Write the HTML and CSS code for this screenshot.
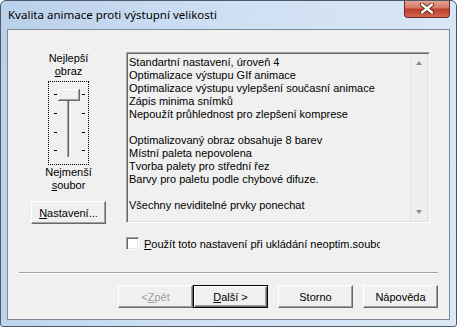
FILE: index.html
```html
<!DOCTYPE html>
<html lang="cs">
<head>
  <meta charset="UTF-8"/>
  <title>Kvalita animace proti výstupní velikosti</title>
  <link rel="stylesheet" href="styles.css">
</head>
<body>
  <div class="window">
    <div class="titlebar">
      <span class="title">Kvalita animace proti výstupní velikosti</span>
      <div class="close-btn">
        <svg width="16" height="11" viewBox="0 0 16 11">
          <path d="M3 1.5 L13 9.5 M13 1.5 L3 9.5" stroke="#5a2218" stroke-width="4.2" stroke-linecap="round"/>
          <path d="M3 1.5 L13 9.5 M13 1.5 L3 9.5" stroke="#fff" stroke-width="2.4" stroke-linecap="round"/>
        </svg>
      </div>
    </div>
    <div class="client">
      <div class="main">
        <div class="quality">
          <div class="q-label">Nejlepší<br><u>o</u>braz</div>
          <div class="slider">
            <svg width="39" height="82" viewBox="0 0 39 82">
              <g fill="#000">
                <rect x="5" y="12" width="3" height="1"/><rect x="33" y="12" width="3" height="1"/>
                <rect x="5" y="31" width="3" height="1"/><rect x="33" y="31" width="3" height="1"/>
                <rect x="5" y="50" width="3" height="1"/><rect x="33" y="50" width="3" height="1"/>
                <rect x="5" y="68" width="3" height="1"/><rect x="33" y="68" width="3" height="1"/>
              </g>
              <rect x="18" y="18" width="1" height="57" fill="#a0a0a0"/>
              <rect x="19" y="18" width="1" height="57" fill="#696969"/>
              <rect x="20" y="18" width="1" height="57" fill="#e3e3e3"/>
              <rect x="21" y="18" width="1" height="57" fill="#fff"/>
              <rect x="9" y="7" width="22" height="12" fill="#696969"/>
              <rect x="9" y="7" width="21" height="11" fill="#fff"/>
              <rect x="10" y="8" width="20" height="10" fill="#a0a0a0"/>
              <rect x="10" y="8" width="19" height="9" fill="#f0f0f0"/>
            </svg>
          </div>
          <div class="q-label low">Nejmenší<br><u>s</u>oubor</div>
          <div class="btn settings"><u>N</u>astavení...</div>
        </div>
        <div class="listbox">
          <div class="list-text">
            <div>Standartní nastavení, úroveň 4</div>
            <div>Optimalizace výstupu GIf animace</div>
            <div>Optimalizace výstupu vylepšení současní animace</div>
            <div>Zápis minima snímků</div>
            <div>Nepoužít průhlednost pro zlepšení komprese</div>
            <div>&nbsp;</div>
            <div>Optimalizovaný obraz obsahuje 8 barev</div>
            <div>Místní paleta nepovolena</div>
            <div>Tvorba palety pro střední řez</div>
            <div>Barvy pro paletu podle chybové difuze.</div>
            <div>&nbsp;</div>
            <div>Všechny neviditelné prvky ponechat</div>
          </div>
          <div class="scroll">
            <span class="arrow up"></span>
            <span class="arrow down"></span>
          </div>
        </div>
      </div>
      <div class="check-row">
        <span class="checkbox"></span>
        <span class="check-label"><u>P</u>oužít toto nastavení při ukládání neoptim.souboru</span>
      </div>
      <div class="separator"></div>
      <div class="buttons">
        <div class="btn disabled">&lt; <u>Z</u>pět</div>
        <div class="btn default"><u>D</u>alší &gt;</div>
        <div class="btn gap">Storno</div>
        <div class="btn gap">Nápověda</div>
      </div>
    </div>
  </div>
</body>
</html>
```
FILE: styles.css
```css
body {
  margin:0;
  background:#fff;
  font-family:'Liberation Sans',Arial,sans-serif;
  font-size:11px;
  color:#000;
}
.window {
  width:457px;
  height:327px;
  box-sizing:border-box;
  border:1px solid #4d5a6b;
  border-radius:6px 6px 3px 3px;
  background:linear-gradient(100deg,#b9d0ea 0%,#cfe0f3 45%,#dbe8f6 100%);
  display:flex;
  flex-direction:column;
  overflow:hidden;
}
.titlebar {
  height:28px;
  display:flex;
  justify-content:space-between;
  align-items:flex-start;
  flex-shrink:0;
}
.title {
  font-family:'Noto Sans','Open Sans',sans-serif;
  font-size:11.5px;
  margin:6px 0 0 7px;
  color:#000;
}
.close-btn {
  width:44px;
  height:17px;
  margin-right:6px;
  margin-top:-1px;
  border:1px solid #6b2a1f;
  border-top:none;
  border-radius:0 0 4px 4px;
  background:linear-gradient(180deg,#e8a899 0%,#d67a66 45%,#c0402a 55%,#d2654e 100%);
  display:flex;
  align-items:center;
  justify-content:center;
}
.client {
  flex:1;
  margin:0 6px 6px 6px;
  border:1px solid #7d8a9a;
  background:#f0f0f0;
  display:flex;
  flex-direction:column;
}
.main {
  display:flex;
  padding:22px 0 0 23px;
}
.quality {
  width:75px;
  display:flex;
  flex-direction:column;
  align-items:center;
}
.q-label {
  text-align:center;
  line-height:13px;
}
.slider {
  margin-top:3px;
  width:39px;
  height:82px;
  border:1px dotted #000;
}
.slider svg { display:block; }
.q-label.low { margin-top:1px; }
.btn {
  width:75px;
  height:23px;
  box-sizing:border-box;
  border:1px solid;
  border-color:#fff #696969 #696969 #fff;
  box-shadow:inset -1px -1px 0 #a0a0a0;
  background:#f0f0f0;
  display:flex;
  align-items:center;
  justify-content:center;
}
.settings { margin-top:9px; }
.listbox {
  margin-left:20px;
  width:304px;
  height:171px;
  box-sizing:border-box;
  border:1px solid;
  border-color:#a0a0a0 #fff #fff #a0a0a0;
  box-shadow:inset 1px 1px 0 #696969, inset -1px -1px 0 #e3e3e3;
  display:flex;
}
.list-text {
  flex:1;
  padding:3px 0 0 2px;
  line-height:13px;
  white-space:nowrap;
}
.scroll {
  width:16px;
  margin:1px 1px 1px 0;
  border-left:1px solid #e3e3e3;
  border-right:1px solid #e8e8e8;
  background:#eeeeee;
  display:flex;
  flex-direction:column;
  justify-content:space-between;
  align-items:center;
  padding:7px 0 7px 0;
}
.arrow {
  width:0;
  height:0;
  border-left:3.5px solid transparent;
  border-right:3.5px solid transparent;
}
.arrow.up { border-bottom:4px solid #8c8c8c; }
.arrow.down { border-top:4px solid #8c8c8c; }
.check-row {
  display:flex;
  align-items:center;
  margin:13px 0 0 118px;
  height:13px;
}
.checkbox {
  width:13px;
  height:13px;
  box-sizing:border-box;
  border:1px solid;
  border-color:#a0a0a0 #fff #fff #a0a0a0;
  box-shadow:inset 1px 1px 0 #696969, inset -1px -1px 0 #e3e3e3;
  background:#fff;
}
.check-label {
  margin-left:5px;
  width:236px;
  overflow:hidden;
  white-space:nowrap;
}
.separator {
  margin:22px 0 0 11px;
  width:419px;
  height:1px;
  border-top:1px solid #a0a0a0;
  border-bottom:1px solid #fff;
  height:0;
}
.buttons {
  display:flex;
  margin:11px 0 0 110px;
}
.btn.disabled { color:#a0a0a0; }
.btn.default {
  border:1px solid #000;
  box-shadow:inset 1px 1px 0 #fff, inset -1px -1px 0 #696969, inset -2px -2px 0 #a0a0a0;
}
.btn.gap { margin-left:10px; }
```
